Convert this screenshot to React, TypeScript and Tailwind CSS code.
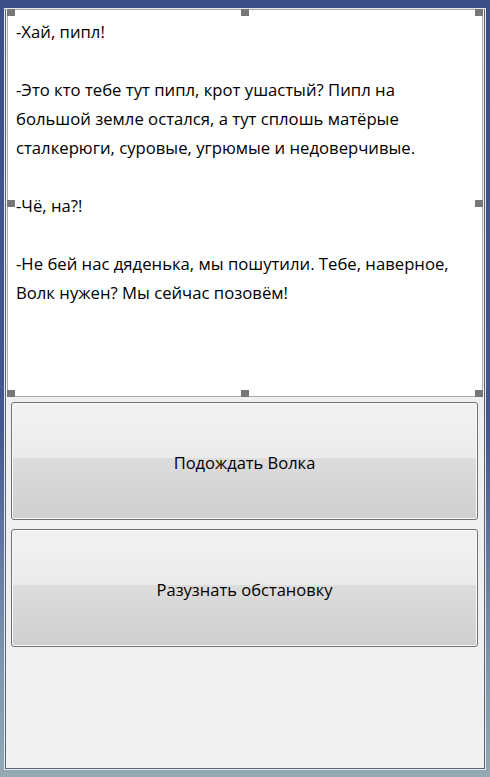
import React from 'react';

const lines = [
  '-Хай, пипл!',
  '',
  '-Это кто тебе тут пипл, крот ушастый? Пипл на',
  'большой земле остался, а тут сплошь матёрые',
  'сталкерюги, суровые, угрюмые и недоверчивые.',
  '',
  '-Чё, на?!',
  '',
  '-Не бей нас дяденька, мы пошутили. Тебе, наверное,',
  'Волк нужен? Мы сейчас позовём!',
];

// designer selection handle
function Handle() {
  return <div className="w-[8px] h-[7px] bg-[#777777]" />;
}

function HandleRow({ middle = true }: { middle?: boolean }) {
  return (
    <div className="flex justify-between">
      <Handle />
      {middle && <Handle />}
      <Handle />
    </div>
  );
}

function DialogButton({ label }: { label: string }) {
  return (
    <button className="w-full h-[118px] rounded-[3px] border border-[#707070] bg-[linear-gradient(180deg,#f2f2f2_0%,#ebebeb_47%,#dddddd_47%,#cfcfcf_100%)] shadow-[inset_0_0_0_1px_#fbfbfb] text-[16.5px] text-black pt-[4px]">
      {label}
    </button>
  );
}

export default function App() {
  return (
    <div
      className="w-[490px] h-[777px] pt-[8px] pl-[4px] pr-[4px] pb-[7px] bg-[linear-gradient(180deg,#3e4f88_0%,#44578f_55%,#7d95ad_85%,#93a9b4_100%)]"
      style={{ fontFamily: '"Open Sans", "Noto Sans", sans-serif' }}
    >
      <div className="w-full h-full border border-[#e3e9ef]">
        <div className="w-full h-full border border-[#5b6470] border-t-0 bg-[#f0f0f0] flex flex-col">
          {/* text box with designer handles */}
          <div className="relative mx-[1px] h-[388px] bg-white border border-[#acacac]">
            <div className="pt-[7px] pl-[8px] text-[16.7px] leading-[29px] text-black whitespace-nowrap">
              {lines.map((l, i) => (
                <div key={i} className="h-[29px]">{l}</div>
              ))}
            </div>
            <div className="absolute -inset-[1px] flex flex-col justify-between">
              <HandleRow />
              <HandleRow middle={false} />
              <HandleRow />
            </div>
          </div>
          <div className="flex flex-col gap-[9px] pt-[5px] pl-[5px] pr-[6px]">
            <DialogButton label="Подождать Волка" />
            <DialogButton label="Разузнать обстановку" />
          </div>
        </div>
      </div>
    </div>
  );
}
